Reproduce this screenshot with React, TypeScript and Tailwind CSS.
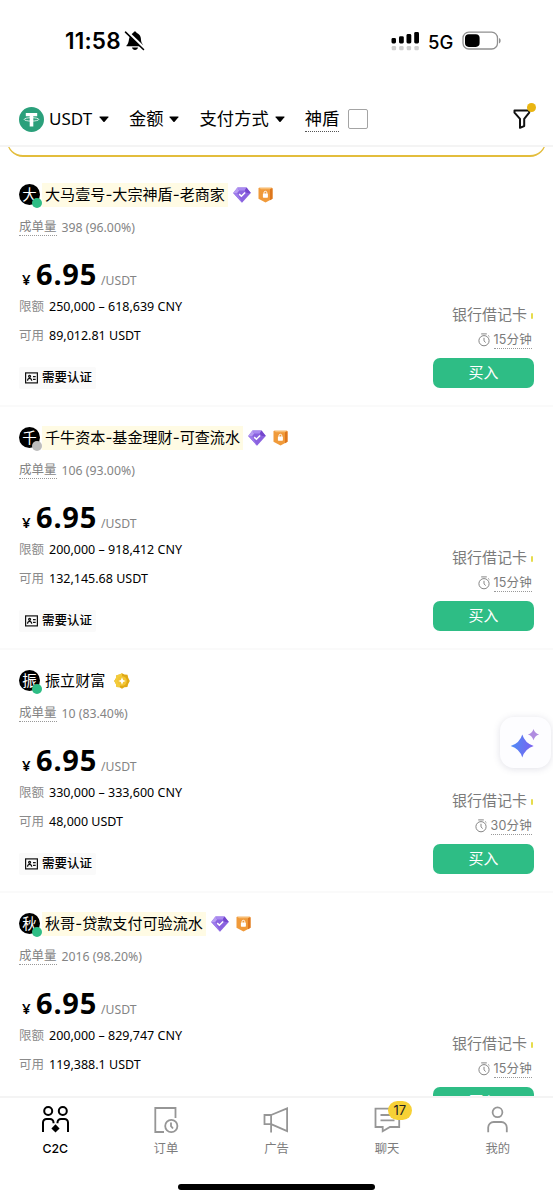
import React from "react";

interface Merchant {
  name: string;
  initial: string;
  online: boolean;
  verified: boolean;
  orders: string;
  limit: string;
  available: string;
  minutes: number;
}

const MERCHANTS: Merchant[] = [
  {
    name: "大马壹号-大宗神盾-老商家",
    initial: "大",
    online: true,
    verified: true,
    orders: "398 (96.00%)",
    limit: "250,000 – 618,639 CNY",
    available: "89,012.81 USDT",
    minutes: 15
  },
  {
    name: "千牛资本-基金理财-可查流水",
    initial: "千",
    online: false,
    verified: true,
    orders: "106 (93.00%)",
    limit: "200,000 – 918,412 CNY",
    available: "132,145.68 USDT",
    minutes: 15
  },
  {
    name: "振立财富",
    initial: "振",
    online: true,
    verified: false,
    orders: "10 (83.40%)",
    limit: "330,000 – 333,600 CNY",
    available: "48,000 USDT",
    minutes: 30
  },
  {
    name: "秋哥-贷款支付可验流水",
    initial: "秋",
    online: true,
    verified: true,
    orders: "2016 (98.20%)",
    limit: "200,000 – 829,747 CNY",
    available: "119,388.1 USDT",
    minutes: 15
  }
];

export default function App() {
  return (
    <main className="relative flex h-[1200px] w-[553px] flex-col overflow-hidden bg-white font-['Inter','Noto_Sans_CJK_SC',sans-serif] text-black">
      <StatusBar />
      <FilterBar />
      <section className="min-h-0 flex-1 overflow-hidden">
        {/* 顶部横幅底边 */}
        <div className="mx-[7px] h-[11px] overflow-hidden">
          <div className="-mt-[30px] h-10 rounded-[16px] border border-b-2 border-[#e3bd3c]" />
        </div>
        <ul className="mt-[6px]">
          {MERCHANTS.map((merchant) => (
            <MerchantCard key={merchant.name} merchant={merchant} />
          ))}
        </ul>
      </section>
      <TabBar />

      {/* AI 悬浮按钮 */}
      <button className="absolute left-[500px] top-[717px] flex size-[51px] items-center justify-center rounded-[14px] bg-[#fdfdff] shadow-[0_1px_7px_rgba(70,70,110,0.17)]">
        <SparkleIcon />
      </button>
    </main>
  );
}

const StatusBar: React.FC = () => {
  return (
    <header className="flex h-[82px] shrink-0 items-center pl-[65px] pr-[51px]">
      <span className="w-[56px] whitespace-nowrap text-[22.5px] font-semibold leading-[26px] tracking-[0.2px]">
        11:58
      </span>
      <BellOffIcon />
      <div className="ml-auto flex items-center">
        <svg width="29" height="20" viewBox="0 0 29 20" className="-mt-px mr-[8px]">
          <rect x="0.5" y="7" width="4.5" height="5.5" rx="1.4" />
          <rect x="8" y="5.2" width="4.8" height="7.3" rx="1.4" />
          <rect x="15.5" y="3" width="4.8" height="9.5" rx="1.4" />
          <rect x="23.2" y="1" width="4.8" height="11.5" rx="1.4" />
          <g fill="#cfcfcf">
            <rect x="0.7" y="15" width="4.4" height="4.3" rx="1.2" />
            <rect x="8.2" y="15" width="4.4" height="4.3" rx="1.2" />
            <rect x="15.7" y="15" width="4.4" height="4.3" rx="1.2" />
            <rect x="23.4" y="15" width="4.4" height="4.3" rx="1.2" />
          </g>
        </svg>
        <span className="w-[34px] pt-px text-[18.5px] font-medium leading-6">
          5G
        </span>
        <svg width="40" height="20" viewBox="0 0 40 20">
          <rect
            x="1"
            y="1.2"
            width="34.5"
            height="16.8"
            rx="5.8"
            fill="none"
            stroke="#909090"
            strokeWidth="1.3"
          />
          <rect x="3" y="3.3" width="14.6" height="12.6" rx="3.8" />
          <path d="M37 7c2.2.8 2.2 4.6 0 5.4z" fill="#909090" />
        </svg>
      </div>
    </header>
  );
};

const FilterBar: React.FC = () => {
  return (
    <nav className="flex h-[65px] shrink-0 items-center border-b-2 border-[#f4f4f4] pl-[19px] pr-[17px] pt-[11px] text-[17.3px] leading-6">
      <TetherIcon />
      <span className="ml-[5px] w-[45px] font-['Noto_Sans',sans-serif] text-[17px]">
        USDT
      </span>
      <Caret className="ml-[5px]" />
      <span className="ml-[20px]">金额</span>
      <Caret className="ml-[5px]" />
      <span className="ml-[21px]">支付方式</span>
      <Caret className="ml-[6px]" />
      <span className="ml-[20px] border-b border-dotted border-[#555]">
        神盾
      </span>
      <span className="ml-[9px] size-[20px] rounded-[2px] border-[1.5px] border-[#a4a4a4]" />
      <div className="relative ml-auto">
        <svg
          width="24"
          height="24"
          viewBox="0 0 24 24"
          fill="none"
          stroke="#111"
          strokeWidth="2"
          strokeLinejoin="round"
        >
          <path d="M2.500 3.500h14.700v2.200l-5 6.200v7.200l-4.200 1.700V11.900l-5.500-6.200z" />
        </svg>
        <span className="absolute right-0 -top-[4px] size-[9px] rounded-full bg-[#e9b512]" />
      </div>
    </nav>
  );
};

const Caret: React.FC<{ className?: string }> = ({ className }) => {
  return (
    <svg width="10" height="7" viewBox="0 0 10 7" className={className}>
      <path d="M1 .5h8q1 0 .4.8L5.600 5.700q-.6.6-1.200 0L.6 1.300Q0 .5 1 .5z" />
    </svg>
  );
};

const MerchantCard: React.FC<{ merchant: Merchant }> = ({ merchant }) => {
  return (
    <li className="flex h-[243px] flex-col border-b-2 border-[#fafafa] pl-[19px] pr-[19px] pt-[17px]">
      <div className="flex h-7 items-center">
        <div className="relative -mt-px flex size-[21px] items-center justify-center rounded-full bg-black text-[14.5px] leading-5 text-white">
          <span>{merchant.initial}</span>
          <span
            className={`absolute -right-[2px] -bottom-[3px] size-[10px] rounded-full ${
              merchant.online ? "bg-[#2ebd85]" : "bg-[#bcbcbc]"
            }`}
          />
        </div>
        <p
          className={`-mt-px ml-[2px] py-px pl-[3px] pr-[3px] text-[15.100px] leading-[22px] ${
            merchant.verified ? "bg-[#fffbe4]" : ""
          }`}
        >
          {merchant.name}
        </p>
        {merchant.verified ? (
          <>
            <DiamondIcon />
            <ShieldIcon />
          </>
        ) : (
          <CoinIcon />
        )}
      </div>

      <p className="mt-[8px] flex h-5 items-center text-[12.5px] leading-[17px] text-[#848484]">
        <span className="border-b border-dotted border-[#999]">成单量</span>
        <span className="ml-[5px] font-['Noto_Sans',sans-serif] text-[12.300px]">
          {merchant.orders}
        </span>
      </p>

      <div className="mt-[18px] flex h-[38px] items-baseline pl-[3px] font-['Noto_Sans','Noto_Sans_CJK_SC',sans-serif] leading-[38px]">
        <span className="w-[14px] text-[15px] font-semibold">¥</span>
        <span className="w-[65px] text-[29px] font-bold tracking-[0.8px]">
          6.95
        </span>
        <span className="text-[12.200px] text-[#848484]">/USDT</span>
      </div>

      <div className="flex justify-between">
        <div>
          <DetailRow label="限额" value={merchant.limit} />
          <DetailRow label="可用" value={merchant.available} />
          <div className="mt-[16px] flex h-[22px] w-[77px] items-center gap-[4px] rounded-[2px] bg-[#fafafa] pl-[6px]">
            <IdCardIcon />
            <span className="whitespace-nowrap text-[12.5px] font-medium leading-5">
              需要认证
            </span>
          </div>
        </div>
        <div className="flex flex-col items-end pt-[11px]">
          <div className="flex h-[22px] items-center gap-[4px] pr-px text-[15px] leading-[22px] text-[#7b7b7b]">
            银行借记卡
            <span className="mt-[2px] h-[6px] w-[2px] rounded-full bg-[#e6dc4c]" />
          </div>
          <div className="mt-[4px] flex h-5 items-center gap-[4px] pr-[2px] text-[12.5px] leading-[17px] text-[#7b7b7b]">
            <TimerIcon />
            <span className="whitespace-nowrap border-b border-dotted border-[#999] text-center tracking-[0.2px]">
              {merchant.minutes}分钟
            </span>
          </div>
          <button className="mt-[8px] h-[30px] w-[101px] rounded-[7px] bg-[#2ebd85] text-[15px] leading-[28px] text-white">
            买入
          </button>
        </div>
      </div>
    </li>
  );
};

const DetailRow: React.FC<{ label: string; value: string }> = ({
  label,
  value
}) => {
  return (
    <p className="flex h-[29px] items-center gap-[5px] text-[12.5px]">
      <span className="text-[#8b8b8b]">{label}</span>
      <span className="whitespace-nowrap font-['Noto_Sans',sans-serif] text-[12.5px]">
        {value}
      </span>
    </p>
  );
};

const TabBar: React.FC = () => {
  return (
    <footer className="flex h-[104px] shrink-0 flex-col border-t-2 border-[#f4f4f4] bg-white">
      <div className="grid h-[62px] grid-cols-5 pt-[6px]">
        <TabItem label="C2C" active>
          <g fill="none" stroke="#000" strokeWidth="2">
            <circle cx="8.200" cy="7" r="4" />
            <circle cx="22.800" cy="7" r="4" />
            <path d="M3 28V18.500a3.500 3.500 0 0 1 3.500-3.500h3.500a3.500 3.500 0 0 1 3.500 3.500v.8M28 28V18.500a3.500 3.500 0 0 0-3.500-3.500H21a3.500 3.500 0 0 0-3.500 3.500v.8" />
          </g>
          <path d="M15.500 20.300l4.100 4.100-4.100 4.100-4.100-4.100z" />
        </TabItem>
        <TabItem label="订单">
          <path d="M14 28H5.300V4h20.200v10" />
          <circle cx="21.300" cy="22" r="6.100" />
          <path d="M21 18.500v3.700l2 2.300" />
        </TabItem>
        <TabItem label="广告">
          <path d="M3.500 11h6.600v9.200H3.500zM10.100 11l16-6.700v22.800l-16-6.900M10.100 20v8.500" />
        </TabItem>
        <TabItem label="聊天" badge="17">
          <path d="M3.500 4.700h23.700v18.300H18l-7.300 4.300v-4.300H3.500zM8.500 11h14M8.500 16.400h14" />
        </TabItem>
        <TabItem label="我的">
          <circle cx="15.500" cy="8.300" r="4.900" />
          <path d="M6.200 28.300V23.500a5.500 5.500 0 0 1 5.500-5.500h7.600a5.500 5.500 0 0 1 5.500 5.500v4.800" />
        </TabItem>
      </div>
      {/* Home 指示条 */}
      <div className="ml-[178px] mt-[24px] h-[6px] w-[197px] rounded-full bg-black" />
    </footer>
  );
};

interface TabItemProps {
  label: string;
  active?: boolean;
  badge?: string;
  children: React.ReactNode;
}

const TabItem: React.FC<TabItemProps> = ({
  label,
  active,
  badge,
  children
}) => {
  return (
    <div className="relative flex flex-col items-center">
      <svg
        width="31"
        height="31"
        viewBox="0 0 31 31"
        fill={active ? "#000" : "none"}
        stroke={active ? "none" : "#969696"}
        strokeWidth="1.800"
      >
        {children}
      </svg>
      <span
        className={`mt-[5px] text-[12.3px] leading-[18px] ${
          active ? "font-medium text-black" : "text-[#7c7c7c]"
        }`}
      >
        {label}
      </span>
      {badge && (
        <span className="absolute left-[56px] -top-[3px] h-[19px] w-[24px] rounded-full bg-[#f7d136] text-center text-[13px] leading-[19px] text-[#222]">
          {badge}
        </span>
      )}
    </div>
  );
};

const BellOffIcon: React.FC = () => {
  return (
    <svg width="22" height="22" viewBox="0 0 22 22" className="ml-[3px]">
      <path d="M2.500 15.500C5.500 13 4.200 8.500 6.500 5.500 7.500 4 8.600 3.500 9.200 3.100c.2-2.200 3.200-2.200 3.500 0C16 4.300 17 7.200 17 10c0 3 2.200 4.100 2.200 6.200H3c-.6 0-.8-.3-.5-.7z" />
      <path d="M8 17.500h6c-.4 3.200-5.600 3.200-6 0z" />
      <path d="M2.900 1.500l17.800 17" stroke="#fff" strokeWidth="2.600" />
      <path
        d="M1.500 2.200L19.500 19.500"
        stroke="#000"
        strokeWidth="1.600"
        strokeLinecap="round"
      />
    </svg>
  );
};

const TetherIcon: React.FC = () => {
  return (
    <svg width="25" height="25" viewBox="0 0 25 25">
      <circle cx="12.500" cy="12.500" r="12.500" fill="#2ba07b" />
      <path d="M6.800 6h11.400v3.200h-3.900v10.300h-3.600V9.200H6.800z" fill="#fff" />
      <ellipse
        cx="12.500"
        cy="12.400"
        rx="7.300"
        ry="1.700"
        fill="none"
        stroke="#fff"
        strokeWidth=".8"
      />
    </svg>
  );
};

const DiamondIcon: React.FC = () => {
  return (
    <svg width="18" height="16" viewBox="0 0 18 16" className="ml-[5px]">
      <path d="M4.500.5h9L17.800 6 9 15.700.2 6z" fill="#8a62df" />
      <path d="M4.500.5L.2 6h4l2-2.500z" fill="#b79cf2" />
      <path d="M13.500.5h-9l1.700 3h5.600z" fill="#a98af0" />
      <path d="M13.500.5L17.800 6h-4l-2-2.500z" fill="#7446cd" />
      <path d="M.2 6L9 15.700 4.200 6z" fill="#9d7beb" />
      <path
        d="M6.200 7.100l2.200 2.200 3.700-3.900"
        fill="none"
        stroke="#fff"
        strokeWidth="1.500"
      />
    </svg>
  );
};

const ShieldIcon: React.FC = () => {
  return (
    <svg width="15" height="16" viewBox="0 0 15 16" className="ml-[7px]">
      <path d="M1 .8h13l.5.7v10.300l-7 3.700-7-3.700V1.500z" fill="#f09a3a" />
      <path d="M12 1.500h2.500v10.300L12 13.200z" fill="#dd761d" />
      <path d="M1 .8h13l-2 1.500H3z" fill="#f8bd72" />
      <rect x="4.900" y="6.500" width="5" height="4.200" rx=".6" fill="#fff" />
      <path
        d="M6 6.800V5.700a1.400 1.400 0 0 1 2.800 0v1.100"
        fill="none"
        stroke="#fff"
        strokeWidth="1"
      />
    </svg>
  );
};

const CoinIcon: React.FC = () => {
  return (
    <svg width="16" height="16" viewBox="0 0 16 16" className="ml-[6px]">
      <path
        d="M8 .3l2.500 1.300 3 .1.700 3L15.800 8l-1.600 3-.8 2.900-3 .4L8 15.700l-2.500-1.500-3-.3-.6-3L.2 8l1.700-2.800.5-3 3.100-.6z"
        fill="#e0a915"
      />
      <path
        d="M.2 8l1.700-2.800.5-3 3.100-.6L8 .3v7.700l-2.500 6.200-3-.3-.6-3z"
        fill="#f3cc3c"
      />
      <circle cx="8" cy="8" r="4.800" fill="#f2c534" />
      <path
        d="M8 4.200L9.100 6.900 11.800 8 9.100 9.100 8 11.800 6.900 9.100 4.200 8l2.700-1.100z"
        fill="#fff"
      />
    </svg>
  );
};

const IdCardIcon: React.FC = () => {
  return (
    <svg
      width="13"
      height="12"
      viewBox="0 0 13 12"
      fill="none"
      stroke="#111"
      strokeWidth="1.200"
    >
      <rect x=".6" y=".9" width="11.800" height="10" />
      <circle cx="4.600" cy="4.300" r="1" />
      <path d="M2.500 8.700c0-3 4.200-3 4.200 0M8 4.600h2.700M8 7.300h2.700" />
    </svg>
  );
};

const TimerIcon: React.FC = () => {
  return (
    <svg
      width="12"
      height="14"
      viewBox="0 0 12 14"
      fill="none"
      stroke="#858585"
      strokeWidth="1"
    >
      <circle cx="6" cy="7.700" r="5.100" />
      <path d="M3.200.9h5.600M6 4.800v3.100l1.700 1.600M10.200 2.500l1.200 1.200" />
    </svg>
  );
};

const SparkleIcon: React.FC = () => {
  return (
    <svg width="30" height="30" viewBox="0 0 30 30" className="-ml-[2px]">
      <defs>
        <linearGradient id="spark" x1="0" y1="0.500" x2="1" y2="0.600">
          <stop offset="0" stopColor="#4d8df5" />
          <stop offset="1" stopColor="#7c60f0" />
        </linearGradient>
      </defs>
      <path
        d="M12.300 6.500q2.600 8.700 11.400 11.500-8.800 2.800-11.400 11.500Q9.700 20.800.7 18 9.700 15.200 12.300 6.500z"
        fill="url(#spark)"
      />
      <path
        d="M23.500 1q1.300 4.300 5.600 5.600-4.300 1.300-5.600 5.600-1.300-4.300-5.600-5.600 4.300-1.300 5.600-5.600z"
        fill="#b08ce0"
      />
    </svg>
  );
};
